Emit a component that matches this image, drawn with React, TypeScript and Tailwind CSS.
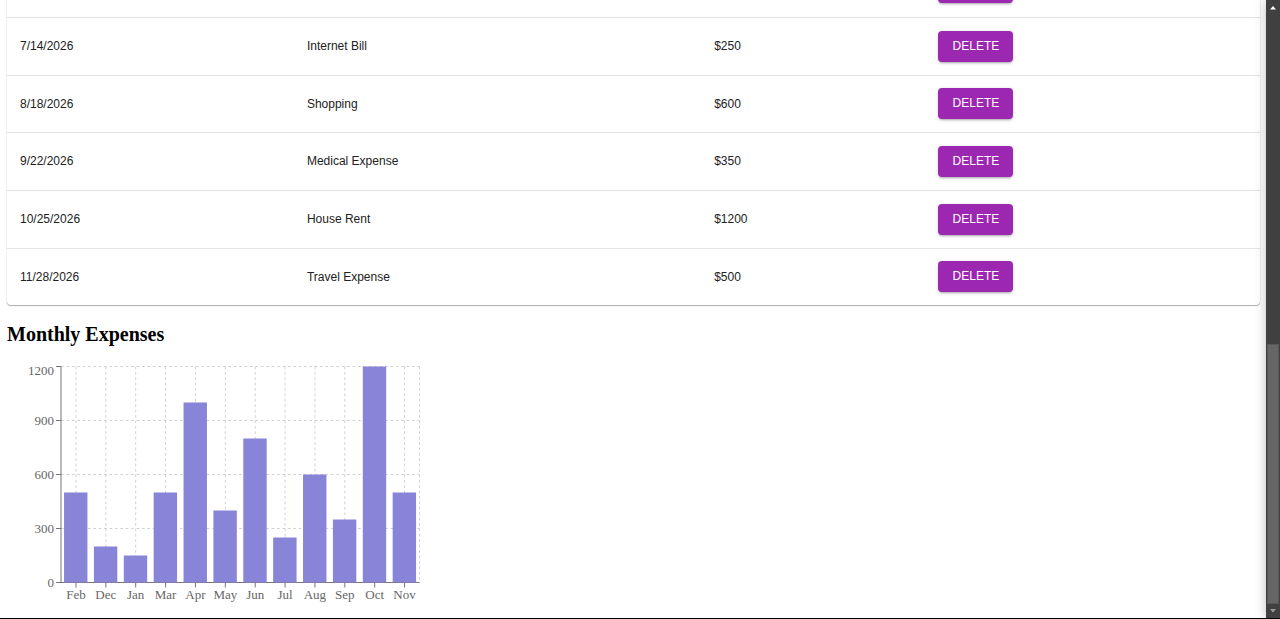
type Expense = { date: string; title: string; amount: string };

const expenses: Expense[] = [
  { date: "7/14/2026", title: "Internet Bill", amount: "$250" },
  { date: "8/18/2026", title: "Shopping", amount: "$600" },
  { date: "9/22/2026", title: "Medical Expense", amount: "$350" },
  { date: "10/25/2026", title: "House Rent", amount: "$1200" },
  { date: "11/28/2026", title: "Travel Expense", amount: "$500" },
];

const monthly = [
  { month: "Feb", total: 500 },
  { month: "Dec", total: 200 },
  { month: "Jan", total: 150 },
  { month: "Mar", total: 500 },
  { month: "Apr", total: 1000 },
  { month: "May", total: 400 },
  { month: "Jun", total: 800 },
  { month: "Jul", total: 250 },
  { month: "Aug", total: 600 },
  { month: "Sep", total: 350 },
  { month: "Oct", total: 1200 },
  { month: "Nov", total: 500 },
];

function DeleteButton() {
  return (
    <button
      type="button"
      className="block h-[31px] w-[75px] rounded-[4px] bg-[#9c27b0] text-center text-[12px] leading-[31px] text-white shadow-[0_2px_2px_-1px_rgba(0,0,0,0.25),0_1px_4px_rgba(0,0,0,0.14)]"
    >
      DELETE
    </button>
  );
}

function ExpenseTable() {
  return (
    <div className="rounded-b-[4px] bg-white shadow-[0_1px_1px_rgba(0,0,0,0.3),0_0_2px_rgba(0,0,0,0.14)]">
      <table className="-mt-[41px] w-full table-fixed border-collapse text-left text-[12px] leading-[18px] text-[#212121]">
        <colgroup>
          <col className="w-[22.9%]" />
          <col className="w-[32.5%]" />
          <col className="w-[17.9%]" />
          <col />
        </colgroup>
        <tbody>
          <tr className="h-[58px] border-b border-[#e4e4e4]">
            <td colSpan={3} />
            <td className="px-[13px]">
              <DeleteButton />
            </td>
          </tr>
          {expenses.map((e) => (
            <tr key={e.date} className="h-[58px] border-b border-[#e4e4e4] last:h-[57px] last:border-0 nth-[3]:h-[57px]">
              <td className="px-[13px]">{e.date}</td>
              <td className="px-[13px]">{e.title}</td>
              <td className="px-[13px]">{e.amount}</td>
              <td className="px-[13px]">
                <DeleteButton />
              </td>
            </tr>
          ))}
        </tbody>
      </table>
    </div>
  );
}

const LEFT = 54;
const RIGHT = 412.5;
const TOP = 10.5;
const BOTTOM = 226.5;
const BAND = (RIGHT - LEFT) / monthly.length;

function MonthlyChart() {
  const yOf = (v: number) => BOTTOM - (v / 1200) * (BOTTOM - TOP);
  const xOf = (i: number) => LEFT + BAND * (i + 0.5);
  return (
    <svg
      width="418"
      height="250"
      viewBox="0 0 418 250"
      role="img"
      aria-label="Monthly Expenses"
      className="block font-['Liberation_Serif',serif] text-[13px]"
    >
      <g stroke="#ccc" strokeWidth="0.9" strokeDasharray="2.7 2.7">
        {[300, 600, 900, 1200].map((v) => (
          <line key={v} x1={LEFT} x2={RIGHT} y1={yOf(v)} y2={yOf(v)} />
        ))}
        {monthly.map((m, i) => (
          <line key={m.month} x1={xOf(i)} x2={xOf(i)} y1={TOP} y2={BOTTOM} />
        ))}
        <line x1={RIGHT} x2={RIGHT} y1={TOP} y2={BOTTOM} />
      </g>
      <g stroke="#666" strokeWidth="0.9">
        <line x1={LEFT} x2={RIGHT} y1={BOTTOM} y2={BOTTOM} />
        <line x1={LEFT} x2={LEFT} y1={TOP} y2={BOTTOM} />
        {[0, 300, 600, 900, 1200].map((v) => (
          <line key={v} x1={LEFT - 5} x2={LEFT} y1={yOf(v)} y2={yOf(v)} />
        ))}
        {monthly.map((m, i) => (
          <line key={m.month} x1={xOf(i)} x2={xOf(i)} y1={BOTTOM} y2={BOTTOM + 5} />
        ))}
      </g>
      <g fill="#8884d8">
        {monthly.map((m, i) => (
          <rect key={m.month} x={xOf(i) - 11.9} y={yOf(m.total)} width="23.4" height={BOTTOM - yOf(m.total)} />
        ))}
      </g>
      <g fill="#666">
        {[0, 300, 600, 900, 1200].map((v) => (
          <text key={v} x="47" y={v === 1200 ? 19 : yOf(v) + 4.5} textAnchor="end">
            {v}
          </text>
        ))}
        {monthly.map((m, i) => (
          <text key={m.month} x={xOf(i)} y="243" textAnchor="middle">
            {m.month}
          </text>
        ))}
      </g>
    </svg>
  );
}

function ScrollTrack() {
  return (
    <div
      aria-hidden="true"
      className="z-10 flex w-[14px] shrink-0 flex-col items-center bg-[#404040] shadow-[0_0_12px_rgba(0,0,0,0.25)]"
    >
      <svg width="14" height="14" viewBox="0 0 14 14" className="shrink-0">
        <path d="M7 6 L10 9.5 H4 Z" fill="#fff" />
      </svg>
      <div className="mt-auto h-[42%] w-3 border border-[#585858] bg-[#666]" />
      <svg width="14" height="14" viewBox="0 0 14 14" className="shrink-0">
        <path d="M4 5 H10 L7 8.5 Z" fill="#999" />
      </svg>
    </div>
  );
}

export default function App() {
  return (
    <div className="flex h-screen overflow-hidden border-b border-black bg-white font-['Liberation_Sans',sans-serif]">
      <main className="min-w-0 flex-1 overflow-hidden pr-[6px] pl-[7px]">
        <ExpenseTable />
        <h2 className="mt-[17px] mb-2.5 font-['Liberation_Serif',serif] text-[20px] leading-6 font-bold text-black">
          Monthly Expenses
        </h2>
        <MonthlyChart />
      </main>
      <ScrollTrack />
    </div>
  );
}
